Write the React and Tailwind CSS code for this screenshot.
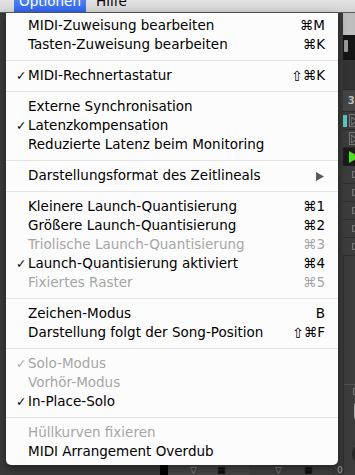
import React from "react";

const sections = [
  [
    { label: "MIDI-Zuweisung bearbeiten", sc: "⌘M" },
    { label: "Tasten-Zuweisung bearbeiten", sc: "⌘K" },
  ],
  [{ label: "MIDI-Rechnertastatur", sc: "⇧⌘K", check: true }],
  [
    { label: "Externe Synchronisation" },
    { label: "Latenzkompensation", check: true },
    { label: "Reduzierte Latenz beim Monitoring" },
  ],
  [{ label: "Darstellungsformat des Zeitlineals", sub: true }],
  [
    { label: "Kleinere Launch-Quantisierung", sc: "⌘1" },
    { label: "Größere Launch-Quantisierung", sc: "⌘2" },
    { label: "Triolische Launch-Quantisierung", sc: "⌘3", dis: true },
    { label: "Launch-Quantisierung aktiviert", sc: "⌘4", check: true },
    { label: "Fixiertes Raster", sc: "⌘5", dis: true },
  ],
  [
    { label: "Zeichen-Modus", sc: "B" },
    { label: "Darstellung folgt der Song-Position", sc: "⇧⌘F" },
  ],
  [
    { label: "Solo-Modus", check: true, dis: true },
    { label: "Vorhör-Modus", dis: true },
    { label: "In-Place-Solo", check: true },
  ],
  [
    { label: "Hüllkurven fixieren", dis: true },
    { label: "MIDI Arrangement Overdub" },
  ],
];

function Shortcut({ sc }) {
  if (sc.startsWith("⇧")) {
    return (
      <div className="whitespace-nowrap flex items-center">
        <span className="text-[14px]">⇧</span>
        <span>{sc.slice(1)}</span>
      </div>
    );
  }
  return <div className="whitespace-nowrap">{sc}</div>;
}

function Row({ item }) {
  const color = item.dis ? "text-[#a6a6a6]" : "text-black";
  return (
    <div className={`flex items-center h-[19px] pr-[13px] pt-[1px] ${color}`}>
      <div className="w-[22px] shrink-0 pl-[10px] text-[12.5px] leading-none">
        {item.check ? "✓" : ""}
      </div>
      <div className="flex-1 whitespace-nowrap">{item.label}</div>
      {item.sc && <Shortcut sc={item.sc} />}
      {item.sub && (
        <svg width="8" height="9" viewBox="0 0 8 9" className="mr-[1px]">
          <path d="M0 0 L8 4.5 L0 9 Z" fill="#5a5a5a" />
        </svg>
      )}
    </div>
  );
}

function Sep() {
  return (
    <div className="h-[12px] flex items-center">
      <div className="h-px w-full bg-[#e2e2e2]" />
    </div>
  );
}

function RightCol() {
  return (
    <div className="w-[17px] shrink-0 flex flex-col bg-[#3c3c3c]">
      <div className="h-[22px] bg-[#bdbdbd]" />
      <div className="h-[25px] bg-[#141414] flex items-start pt-[5px] gap-[7px] pl-[1px]">
        <div className="w-[5px] h-[12px] bg-[#9a9a9a] rounded-[1px]" />
        <div className="w-[5px] h-[12px] bg-[#9a9a9a] rounded-[1px]" />
      </div>
      <div className="h-[30px] bg-[#333] border-b border-[#2a2a2a]" />
      <div className="h-[22px] bg-[#454545] flex items-center pl-[5px] text-[10px] text-[#bbb] font-bold border-b border-[#2a2a2a]">
        3
      </div>
      <div className="h-[18px] flex items-center gap-[2px] border-b border-[#2a2a2a]">
        <div className="w-[4px] h-[12px] bg-[#58c8c0]" />
        <div className="w-[10px] h-[13px] border border-[#777] flex items-center pl-[1px]">
          <svg width="6" height="8" viewBox="0 0 6 8"><path d="M0 0 L6 4 L0 8 Z" fill="none" stroke="#888" /></svg>
        </div>
      </div>
      <div className="h-[18px] flex items-center pl-[6px] border-b border-[#2a2a2a]">
        <div className="w-[10px] h-[13px] border border-[#777] flex items-center pl-[1px]">
          <svg width="6" height="8" viewBox="0 0 6 8"><path d="M0 0 L6 4 L0 8 Z" fill="none" stroke="#888" /></svg>
        </div>
      </div>
      <div className="h-[18px] flex items-center pl-[6px] bg-[#1b1b1b]">
        <svg width="10" height="12" viewBox="0 0 10 12"><path d="M0 0 L10 6 L0 12 Z" fill="#4fe21c" /></svg>
      </div>
      {[0, 1, 2, 3, 4].map((i) => (
        <div key={i} className="h-[18px] flex items-center pl-[9px] border-b border-[#2e2e2e]">
          <div className="w-[7px] h-[7px] border border-[#777] bg-[#444]" />
        </div>
      ))}
      <div className="flex-1 border-l border-[#2e2e2e] flex flex-col">
        <div className="h-[128px]" />
        <div className="h-[14px] border-t border-[#555] flex items-center pl-[9px]">
          <div className="w-[7px] h-[7px] border border-[#777] bg-[#444]" />
        </div>
        <div className="h-[26px] flex items-center pl-[10px]">
          <div className="w-[10px] h-[22px] rounded-l-full bg-[#a8a8a8]" />
        </div>
        <div className="h-[20px]" />
        <div className="h-[20px] flex items-center pl-[8px]">
          <div className="w-[12px] h-[18px] rounded-l-full bg-[#262626]" />
        </div>
      </div>
    </div>
  );
}

export default function App() {
  return (
    <div
      className="relative w-[355px] h-[475px] overflow-hidden bg-[#3a3a3a] flex flex-col"
      style={{ fontFamily: '"DejaVu Sans", "Noto Sans", sans-serif' }}
    >
      {/* menubar */}
      <div className="h-[13px] shrink-0 overflow-hidden border-b border-[#5a5a5a]">
        <div className="mt-[-10px] h-[22px] flex items-center bg-gradient-to-b from-[#f2f2f2] to-[#d2d2d2] text-[13.5px]">
          <div className="ml-[14px] w-[72px] h-full flex items-center justify-center bg-gradient-to-b from-[#6a98f6] to-[#2f62ea] text-white">
            Optionen
          </div>
          <div className="ml-[10px] text-black">Hilfe</div>
        </div>
      </div>
      {/* app background */}
      <div className="flex-1 flex">
        <div className="flex-1 flex flex-col justify-end">
          <div className="h-[10px] flex items-end text-[9px] leading-none text-[#888]">
            <div className="w-[160px]" />
            <div className="w-[8px] h-[10px] bg-black" />
            <div className="w-[82px] h-[10px] bg-[#444] flex items-end">
              <span className="ml-[22px] text-[#999]">▽</span>
              <span className="ml-[20px] text-black">▦</span>
            </div>
            <div className="w-[82px] h-[10px] bg-[#3e3e3e] flex items-end">
              <span className="ml-[25px] text-[#999]">▽</span>
              <span className="ml-[22px] text-black">▦</span>
            </div>
            <span className="ml-[5px] text-[#999]">0</span>
          </div>
        </div>
        <RightCol />
      </div>

      {/* dropdown menu */}
      <div className="absolute left-[6px] top-[13px] w-[332px] bg-[#fcfcfc] rounded-b-[5px] pt-[3px] pb-[4px] text-[13.5px] leading-none shadow-[0_3px_8px_rgba(0,0,0,0.45)]">
        {sections.map((sec, si) => (
          <React.Fragment key={si}>
            {si > 0 && <Sep />}
            {sec.map((it, ii) => (
              <Row key={ii} item={it} />
            ))}
          </React.Fragment>
        ))}
      </div>
    </div>
  );
}
